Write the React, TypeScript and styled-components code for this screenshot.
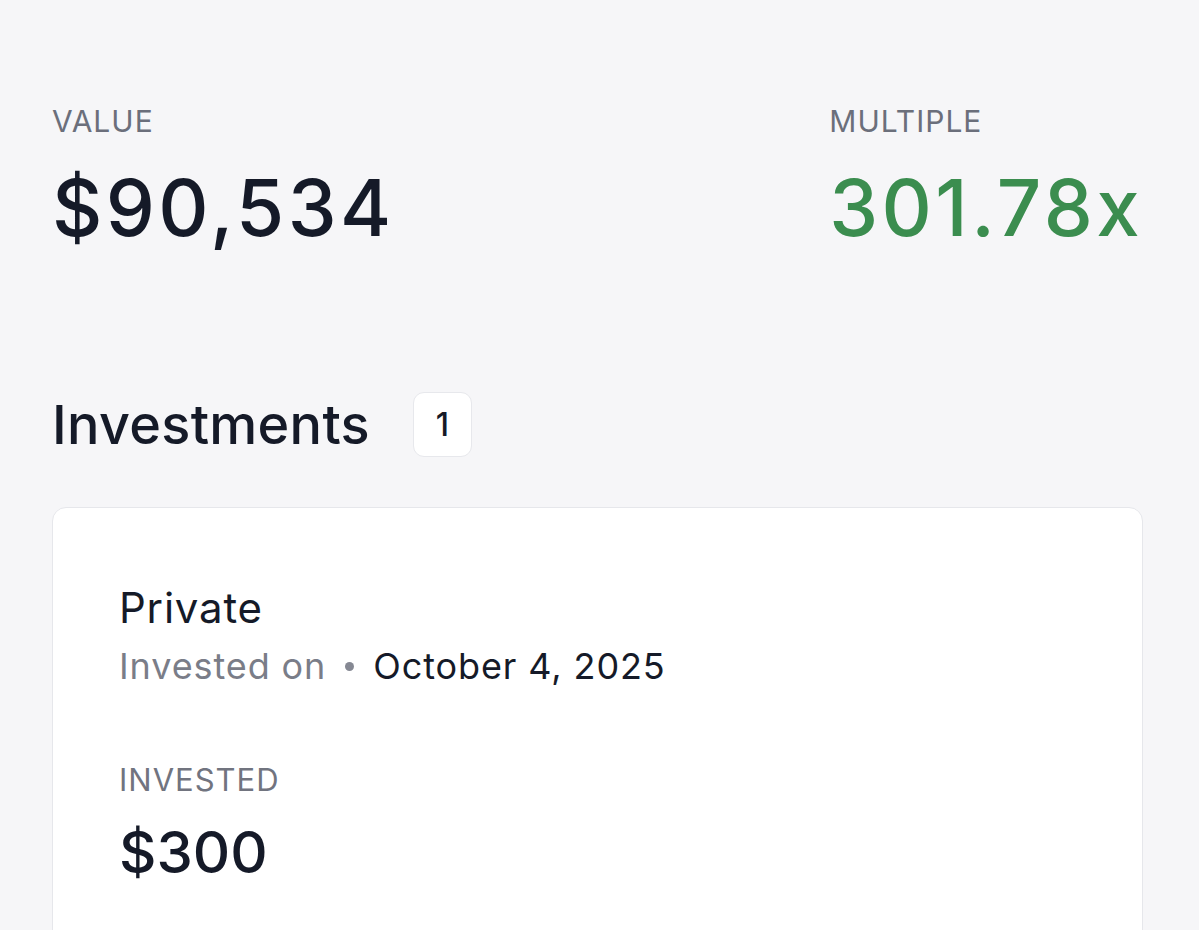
import React from 'react';
import styled, { createGlobalStyle } from 'styled-components';

const GlobalStyle = createGlobalStyle`
  html, body {
    margin: 0;
    padding: 0;
    background: #f6f6f8;
    font-family: Inter, "Noto Sans", sans-serif;
    color: #151a28;
    overflow: hidden;
  }
`;

const Page = styled.main`
  min-height: 930px;
  padding: 101px 56px 0 52px;
  box-sizing: border-box;
`;

const StatsRow = styled.section`
  display: flex;
  justify-content: space-between;
  align-items: flex-start;
`;

const Stat = styled.div`
  display: flex;
  flex-direction: column;
`;

const StatLabel = styled.div`
  font-size: 30px;
  line-height: 40px;
  color: #6b6f7b;
  letter-spacing: 1px;
`;

const StatValue = styled.div<{ $positive?: boolean }>`
  font-size: 78px;
  line-height: 96px;
  font-weight: 500;
  letter-spacing: 3.4px;
  margin-top: 19px;
  color: ${({ $positive }) => ($positive ? '#3b8d4f' : '#151a28')};
`;

const SectionHeader = styled.div`
  display: flex;
  align-items: center;
  gap: 43px;
  margin-top: 136px;
`;

const SectionTitle = styled.h2`
  margin: 0;
  font-size: 54px;
  line-height: 64px;
  font-weight: 500;
  letter-spacing: 0.3px;
`;

const CountBadge = styled.span`
  display: inline-flex;
  align-items: center;
  justify-content: center;
  width: 59px;
  height: 65px;
  box-sizing: border-box;
  background: #ffffff;
  border: 1.5px solid #e7e8ec;
  border-radius: 11px;
  font-size: 32px;
  font-weight: 500;
`;

const Card = styled.article`
  margin-top: 50px;
  background: #ffffff;
  border: 1.5px solid #e6e7eb;
  border-radius: 14px;
  padding: 74px 66px 120px;
`;

const CardTitle = styled.div`
  font-size: 42px;
  line-height: 52px;
  letter-spacing: 0.8px;
`;

const MetaLine = styled.div`
  display: flex;
  align-items: center;
  gap: 19px;
  margin-top: 8px;
  font-size: 36px;
  line-height: 48px;
  letter-spacing: 0.9px;
`;

const MetaMuted = styled.span`
  color: #7a7d88;
`;

const Dot = styled.span`
  width: 9px;
  height: 9px;
  border-radius: 50%;
  background: #858893;
`;

const FieldLabel = styled.div`
  margin-top: 70px;
  font-size: 31px;
  line-height: 40px;
  color: #71747f;
  letter-spacing: 1px;
`;

const FieldValue = styled.div`
  margin-top: 18px;
  font-size: 58px;
  line-height: 68px;
  font-weight: 500;
`;

export default function App() {
  return (
    <>
      <GlobalStyle />
      <Page>
        <StatsRow>
          <Stat>
            <StatLabel>VALUE</StatLabel>
            <StatValue>$90,534</StatValue>
          </Stat>
          <Stat>
            <StatLabel>MULTIPLE</StatLabel>
            <StatValue $positive>301.78x</StatValue>
          </Stat>
        </StatsRow>

        <SectionHeader>
          <SectionTitle>Investments</SectionTitle>
          <CountBadge>1</CountBadge>
        </SectionHeader>

        <Card>
          <CardTitle>Private</CardTitle>
          <MetaLine>
            <MetaMuted>Invested on</MetaMuted>
            <Dot />
            <span>October 4, 2025</span>
          </MetaLine>
          <FieldLabel>INVESTED</FieldLabel>
          <FieldValue>$300</FieldValue>
        </Card>
      </Page>
    </>
  );
}
